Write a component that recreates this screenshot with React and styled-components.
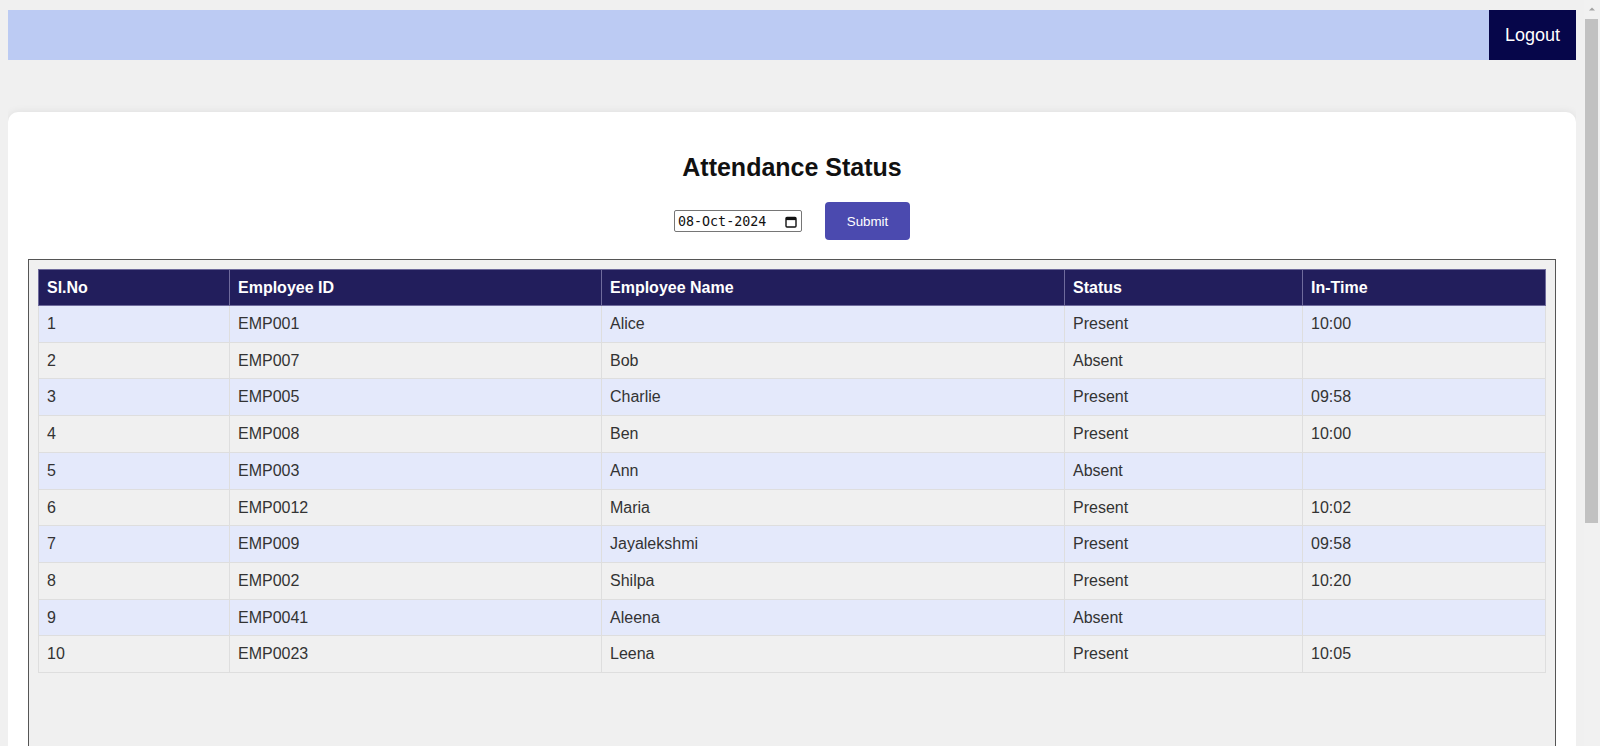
import styled, { createGlobalStyle } from "styled-components";

const GlobalStyle = createGlobalStyle`
  html {
    background: #f0f0f0;
  }
  body {
    margin: 10px 24px 8px 8px;
    font-family: "Liberation Sans", Arial, sans-serif;
  }
`;

const rows = [
  { id: "EMP001", name: "Alice", status: "Present", time: "10:00" },
  { id: "EMP007", name: "Bob", status: "Absent", time: "" },
  { id: "EMP005", name: "Charlie", status: "Present", time: "09:58" },
  { id: "EMP008", name: "Ben", status: "Present", time: "10:00" },
  { id: "EMP003", name: "Ann", status: "Absent", time: "" },
  { id: "EMP0012", name: "Maria", status: "Present", time: "10:02" },
  { id: "EMP009", name: "Jayalekshmi", status: "Present", time: "09:58" },
  { id: "EMP002", name: "Shilpa", status: "Present", time: "10:20" },
  { id: "EMP0041", name: "Aleena", status: "Absent", time: "" },
  { id: "EMP0023", name: "Leena", status: "Present", time: "10:05" },
];

function CalendarIcon() {
  return (
    <svg width="12" height="13" viewBox="0 0 12 13">
      <rect x="1" y="2.5" width="10" height="9.5" rx="1" fill="none" stroke="#111" strokeWidth="1.4" />
      <rect x="1" y="2.5" width="10" height="2.6" fill="#111" />
    </svg>
  );
}

export default function App() {
  return (
    <>
      <GlobalStyle />
      <TopBar>
        <LogoutButton>Logout</LogoutButton>
      </TopBar>
      <Card>
        <Title>Attendance Status</Title>
        <FilterRow>
          <DateField>
            <span>08-Oct-2024</span>
            <CalendarIcon />
          </DateField>
          <SubmitButton>Submit</SubmitButton>
        </FilterRow>
        <TableBox>
          <Table>
            <colgroup>
              <col style={{ width: 191 }} />
              <col style={{ width: 372 }} />
              <col style={{ width: 463 }} />
              <col style={{ width: 238 }} />
              <col />
            </colgroup>
            <thead>
              <tr>
                <Th>Sl.No</Th>
                <Th>Employee ID</Th>
                <Th>Employee Name</Th>
                <Th>Status</Th>
                <Th>In-Time</Th>
              </tr>
            </thead>
            <tbody>
              {rows.map((r, i) => (
                <Row key={r.id} odd={i % 2 === 0}>
                  <Td>{i + 1}</Td>
                  <Td>{r.id}</Td>
                  <Td>{r.name}</Td>
                  <Td>{r.status}</Td>
                  <Td>{r.time}</Td>
                </Row>
              ))}
            </tbody>
          </Table>
        </TableBox>
      </Card>
      <ScrollTrack>
        <ScrollArrow viewBox="0 0 16 18">
          <path d="M5 10.5h6L8 7.5z" fill="#a3a3a3" />
        </ScrollArrow>
        <ScrollThumb />
      </ScrollTrack>
    </>
  );
}

const TopBar = styled.header`
  display: flex;
  justify-content: flex-end;
  height: 50px;
  background-color: #bccbf3;
`;

const LogoutButton = styled.button`
  border: none;
  padding: 0 16px;
  background-color: #06064a;
  color: #fff;
  font-family: "Liberation Sans", Arial, sans-serif;
  font-size: 18px;
  cursor: pointer;
`;

const Card = styled.main`
  margin-top: 52px;
  padding: 20px;
  background: #fff;
  border-radius: 10px;
  box-shadow: 0 0 8px rgba(0, 0, 0, 0.08);
`;

const Title = styled.h2`
  margin: 21px 0 21px;
  text-align: center;
  font-size: 25px;
  line-height: 28px;
  font-weight: 700;
  color: #111;
`;

const FilterRow = styled.div`
  display: flex;
  justify-content: center;
  align-items: center;
  gap: 23px;
`;

const DateField = styled.div`
  box-sizing: border-box;
  display: flex;
  align-items: center;
  justify-content: space-between;
  width: 128px;
  height: 22px;
  padding: 0 4px 0 3px;
  border: 1px solid #767676;
  border-radius: 2px;
  font-family: "DejaVu Sans Mono", "Liberation Mono", monospace;
  font-size: 13.33px;
  color: #111;
`;

const SubmitButton = styled.button`
  box-sizing: border-box;
  width: 85px;
  height: 38px;
  border: none;
  border-radius: 4px;
  background-color: #4b4aaf;
  color: #fff;
  font-family: "Liberation Sans", Arial, sans-serif;
  font-size: 13.33px;
  cursor: pointer;
`;

const TableBox = styled.div`
  box-sizing: border-box;
  margin-top: 19px;
  height: 768px;
  padding: 9px;
  border: 1px solid #555;
  background: #f0f0f0;
`;

const Table = styled.table`
  width: 100%;
  border-collapse: collapse;
  table-layout: fixed;
  font-size: 16px;
`;

const Th = styled.th`
  padding: 9px 8px;
  line-height: 17px;
  text-align: left;
  background-color: #221e5c;
  color: #fff;
  font-weight: 700;
  border: 1px solid #6f6b9c;
`;

const Row = styled.tr`
  background-color: ${(props) => (props.odd ? "#e4e9fb" : "#f0f0f0")};
`;

const Td = styled.td`
  padding: 9px 8px;
  line-height: 17.7px;
  color: #333;
  border: 1px solid #dedede;
`;

const ScrollTrack = styled.div`
  position: fixed;
  top: 0;
  right: 0;
  bottom: 0;
  width: 16px;
  background: #f1f1f1;
`;

const ScrollArrow = styled.svg`
  display: block;
  width: 16px;
  height: 18px;
`;

const ScrollThumb = styled.div`
  margin: 1px 2px 0 1px;
  height: 504px;
  background: #c1c1c1;
`;
